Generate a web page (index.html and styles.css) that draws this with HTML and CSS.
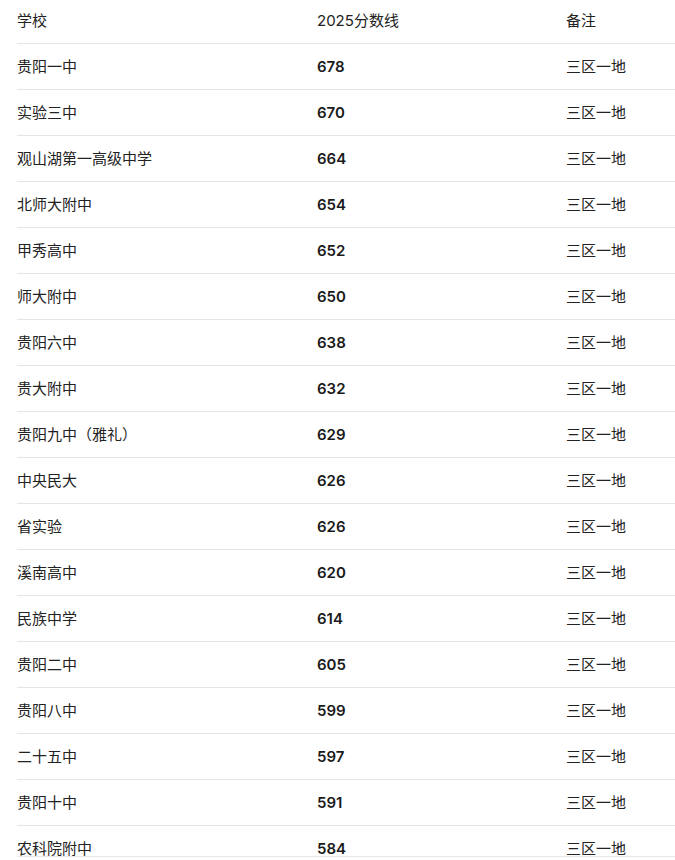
FILE: index.html
```html
<!DOCTYPE html>
<html lang="zh-CN">
<head>
<meta charset="utf-8">
<link rel="stylesheet" href="styles.css">
</head>
<body>
<div class="wrap">
<table class="scores">
<thead>
<tr><th class="c1">学校</th><th class="c2">2025分数线</th><th class="c3">备注</th></tr>
</thead>
<tbody>
<tr><td>贵阳一中</td><td class="num">678</td><td>三区一地</td></tr>
<tr><td>实验三中</td><td class="num">670</td><td>三区一地</td></tr>
<tr><td>观山湖第一高级中学</td><td class="num">664</td><td>三区一地</td></tr>
<tr><td>北师大附中</td><td class="num">654</td><td>三区一地</td></tr>
<tr><td>甲秀高中</td><td class="num">652</td><td>三区一地</td></tr>
<tr><td>师大附中</td><td class="num">650</td><td>三区一地</td></tr>
<tr><td>贵阳六中</td><td class="num">638</td><td>三区一地</td></tr>
<tr><td>贵大附中</td><td class="num">632</td><td>三区一地</td></tr>
<tr><td>贵阳九中（雅礼）</td><td class="num">629</td><td>三区一地</td></tr>
<tr><td>中央民大</td><td class="num">626</td><td>三区一地</td></tr>
<tr><td>省实验</td><td class="num">626</td><td>三区一地</td></tr>
<tr><td>溪南高中</td><td class="num">620</td><td>三区一地</td></tr>
<tr><td>民族中学</td><td class="num">614</td><td>三区一地</td></tr>
<tr><td>贵阳二中</td><td class="num">605</td><td>三区一地</td></tr>
<tr><td>贵阳八中</td><td class="num">599</td><td>三区一地</td></tr>
<tr><td>二十五中</td><td class="num">597</td><td>三区一地</td></tr>
<tr><td>贵阳十中</td><td class="num">591</td><td>三区一地</td></tr>
<tr><td>农科院附中</td><td class="num">584</td><td>三区一地</td></tr>
</tbody>
</table>
</div>
</body>
</html>
```
FILE: styles.css
```css
html, body {
  margin: 0;
  padding: 0;
  background: #ffffff;
}
body {
  font-family: Inter, "Noto Sans CJK SC", sans-serif;
  font-size: 15px;
  color: #222222;
}
.wrap {
  margin-left: 17px;
  height: 856px;
  overflow: hidden;
  border-bottom: 1px solid #e8e8e8;
}
.scores {
  border-collapse: collapse;
  width: 700px;
  table-layout: fixed;
}
.scores th, .scores td {
  text-align: left;
  font-weight: 400;
  line-height: 21px;
  padding: 12px 0;
  border-bottom: 1px solid #e5e5e5;
  white-space: nowrap;
}
.scores th {
  padding: 10px 0 12px;
}
.c1 { width: 300px; }
.c2 { width: 249px; }
.c3 { width: 151px; }
.scores td.num {
  font-weight: 600;
  color: #1a1a1a;
}
```
